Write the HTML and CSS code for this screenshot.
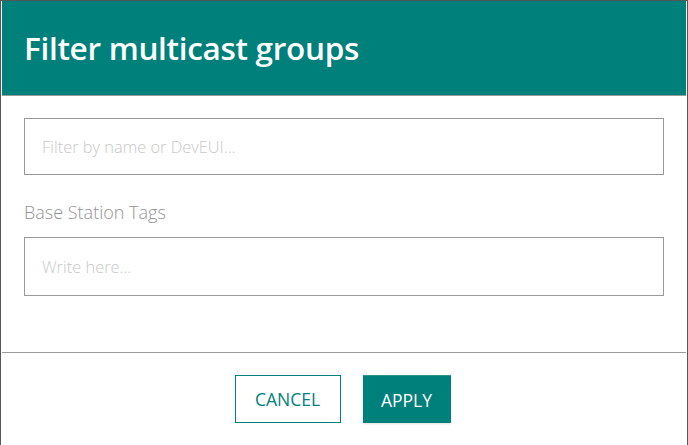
FILE: index.html
```html
<!DOCTYPE html>
<html>
<head>
<meta charset="utf-8">
<link rel="stylesheet" href="styles.css">
</head>
<body>
<div class="dialog">
  <div class="header"><h1 class="title">Filter multicast groups</h1></div>
  <div class="content">
    <input class="field" type="text" placeholder="Filter by name or DevEUI...">
    <label class="label">Base Station Tags</label>
    <input class="field" type="text" placeholder="Write here...">
  </div>
  <div class="footer">
    <button class="btn btn-cancel">CANCEL</button>
    <button class="btn btn-apply">APPLY</button>
  </div>
</div>
</body>
</html>
```
FILE: styles.css
```css
html, body { margin: 0; padding: 0; }
body {
  background: #555555;
  width: 688px;
  height: 445px;
  overflow: hidden;
  font-family: "Open Sans", "Liberation Sans", sans-serif;
}
.dialog {
  margin: 1px 0 0 1px;
  width: 684px;
  height: 444px;
  background: #ffffff;
  border-left: 1px solid #ffffff;
  border-right: 1px solid #ffffff;
  display: flex;
  flex-direction: column;
}
.header {
  background: #00807b;
  height: 94px;
  border-bottom: 1px solid #9a9a9a;
  display: flex;
  align-items: center;
  padding-left: 22px;
  box-sizing: content-box;
}
.title {
  margin: 0;
  color: #ffffff;
  font-size: 31.5px;
  font-weight: 600;
  letter-spacing: -0.3px;
  line-height: 1;
}
.content {
  height: 257px;
  padding: 22px 22px 0 22px;
  box-sizing: border-box;
  border-bottom: 1px solid #9a9a9a;
  display: flex;
  flex-direction: column;
}
.field {
  height: 57px;
  box-sizing: border-box;
  border: 1px solid #999999;
  border-radius: 0;
  padding: 0 17px;
  font-family: "Open Sans", "Liberation Sans", sans-serif;
  font-weight: 300;
  font-size: 16.4px;
  outline: none;
  background: #ffffff;
}
.field + .label + .field { height: 59px; }
.field::placeholder { color: #c8c8c8; }
.label {
  margin-top: 25px;
  margin-bottom: 13px;
  color: #939393;
  font-size: 18px;
  font-weight: 300;
  line-height: 24px;
}
.footer {
  display: flex;
  justify-content: center;
  gap: 22px;
  padding-top: 22px;
  padding-right: 3px;
}
.btn {
  font-family: "Open Sans", "Liberation Sans", sans-serif;
  font-size: 17.5px;
  font-weight: 400;
  height: 48px;
  box-sizing: border-box;
  border-radius: 0;
  cursor: pointer;
}
.btn-cancel {
  width: 106px;
  background: #ffffff;
  color: #00807b;
  border: 1px solid #00807b;
}
.btn-apply {
  width: 88px;
  height: 48px;
  background: #00807b;
  color: #ffffff;
  border: none;
  border-top: 1px solid #2a958f;
  box-shadow: 0 1px 2px rgba(0,0,0,0.12);
}
```
